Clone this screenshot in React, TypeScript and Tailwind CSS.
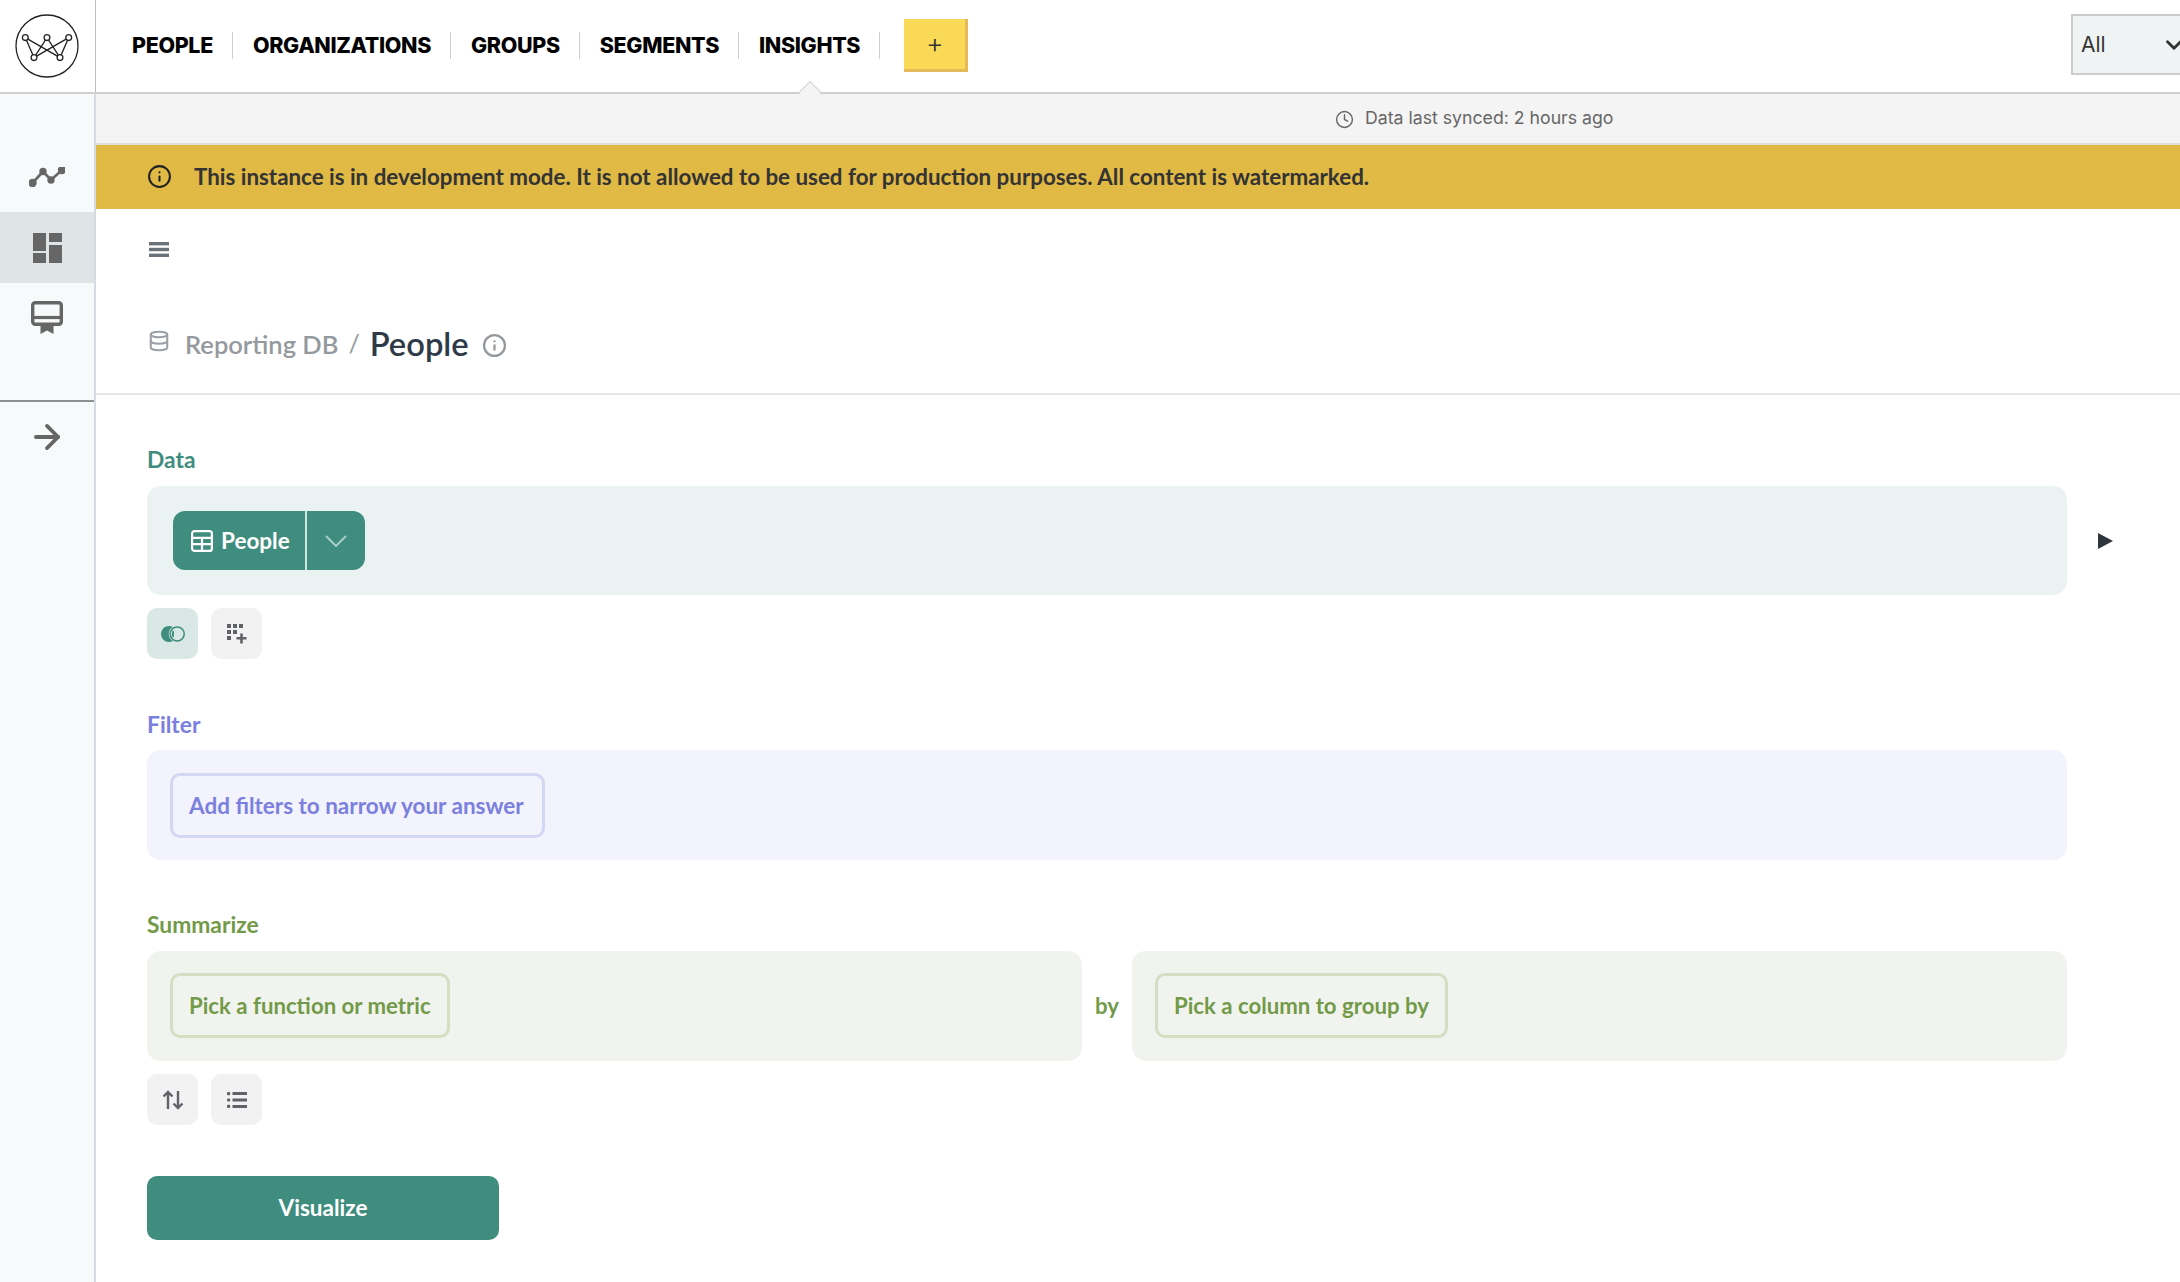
import { ArrowRight, ChevronDown, Clock, Database, Info } from "lucide-react";

const navItems = ["PEOPLE", "ORGANIZATIONS", "GROUPS", "SEGMENTS", "INSIGHTS"];

const Logo = () => (
  <svg viewBox="0 0 64 64" className="w-[64px] h-[64px]" fill="none" stroke="#222" strokeWidth="1.3">
    <circle cx="32" cy="32" r="31" />
    <path d="M10.3 23.6 L19 43.6 L32 23.6 L45 43.6 L53.7 23.6 L19 43.6 M10.3 23.6 L45 43.6" />
    <g fill="#fff">
      <circle cx="10.3" cy="23.6" r="2.9" />
      <circle cx="32" cy="23.6" r="2.9" />
      <circle cx="53.7" cy="23.6" r="2.9" />
      <circle cx="19" cy="43.6" r="2.9" />
      <circle cx="45" cy="43.6" r="2.9" />
    </g>
  </svg>
);

const TrendIcon = () => (
  <svg viewBox="0 0 36 20" className="w-[36px] h-[20px]" fill="none" stroke="#666" strokeWidth="2.6">
    <path d="M3.5 16 L14 4.5 L22 13 L33 3" />
    <circle cx="3.5" cy="16" r="2.9" fill="#666" />
    <circle cx="14" cy="4.5" r="2.4" fill="#666" />
    <circle cx="22" cy="13" r="2.4" fill="#666" />
    <circle cx="33" cy="3" r="2.9" fill="#666" />
  </svg>
);

const DashboardIcon = () => (
  <svg viewBox="0 0 29 30" className="w-[29px] h-[30px]" fill="#666">
    <rect x="0" y="0" width="13" height="18" />
    <rect x="16" y="0" width="13" height="9" />
    <rect x="0" y="20" width="13" height="10" />
    <rect x="16" y="12" width="13" height="18" />
  </svg>
);

const RibbonIcon = () => (
  <svg viewBox="0 0 32 33" className="w-[32px] h-[33px]" fill="none" stroke="#666" strokeWidth="3.4">
    <rect x="1.7" y="1.7" width="28.6" height="21.6" rx="2.5" />
    <path d="M2 16.5 H30" strokeWidth="3.2" />
    <path d="M9.5 23 H22.5 V33 L16 29.5 L9.5 33 Z" fill="#666" stroke="none" />
  </svg>
);

const TableIcon = () => (
  <svg viewBox="0 0 22 22" className="w-[22px] h-[22px]" fill="none" stroke="#fff" strokeWidth="2.2">
    <rect x="1.1" y="1.1" width="19.8" height="19.8" rx="2.5" />
    <path d="M1 7.8 H21 M1 14.2 H21 M11 7.8 V21" />
  </svg>
);

const JoinIcon = () => (
  <svg viewBox="0 0 24 16" className="w-[24px] h-[16px]">
    <path d="M12 1.07 A8 8 0 1 0 12 14.93 A7.8 7.8 0 0 1 12 1.07 Z" fill="#3f8d7e" />
    <circle cx="16.2" cy="8" r="7" fill="none" stroke="#3f8d7e" strokeWidth="1.6" />
    <ellipse cx="12" cy="8" rx="1" ry="3.6" fill="#3f8d7e" />
  </svg>
);

const ExpressionIcon = () => (
  <svg viewBox="0 0 20 20" className="w-[20px] h-[20px]" fill="#5f6368">
    <rect x="0" y="0" width="4" height="4" />
    <rect x="6" y="0" width="4" height="4" />
    <rect x="12" y="0" width="4" height="4" />
    <rect x="0" y="6" width="4" height="4" />
    <rect x="6" y="6" width="4" height="4" />
    <rect x="0" y="12" width="4" height="4" />
    <path d="M13.2 9.5 H15.8 V13 H19.5 V15.6 H15.8 V19.5 H13.2 V15.6 H9.5 V13 H13.2 Z" />
  </svg>
);

const SortIcon = () => (
  <svg viewBox="0 0 22 20" className="w-[22px] h-[20px]" fill="none" stroke="#5f6368" strokeWidth="2.4">
    <path d="M6 19 V2 M1.5 6.5 L6 2 L10.5 6.5" />
    <path d="M16 1 V18 M11.5 13.5 L16 18 L20.5 13.5" />
  </svg>
);

const ListIcon = () => (
  <svg viewBox="0 0 20 16" className="w-[20px] h-[16px]" fill="#5f6368">
    <rect x="0" y="0" width="3.2" height="3.2" rx="1" />
    <rect x="0" y="6.4" width="3.2" height="3.2" rx="1" />
    <rect x="0" y="12.8" width="3.2" height="3.2" rx="1" />
    <rect x="5.5" y="0" width="14.5" height="3" />
    <rect x="5.5" y="6.5" width="14.5" height="3" />
    <rect x="5.5" y="13" width="14.5" height="3" />
  </svg>
);

const MenuBars = () => (
  <svg viewBox="0 0 20 15" className="w-[20px] h-[15px]" fill="#6a7178">
    <rect x="0" y="0" width="20" height="3.4" />
    <rect x="0" y="5.8" width="20" height="3.4" />
    <rect x="0" y="11.6" width="20" height="3.4" />
  </svg>
);

const SmallButton = ({ children, active }: { children: React.ReactNode; active?: boolean }) => (
  <button className={`w-[51px] h-[51px] rounded-[10px] flex items-center justify-center ${active ? "bg-[#d9e8e4]" : "bg-[#f2f2f2]"}`}>
    {children}
  </button>
);

const App = () => {
  return (
    <div className="w-[2180px] h-[1282px] flex flex-col overflow-hidden bg-white font-['Lato','Noto_Sans',sans-serif]">
      {/* top bar */}
      <header className="relative h-[94px] shrink-0 flex items-center border-b-2 border-[#cfcfcf]">
        <div className="w-[96px] h-full shrink-0 flex items-center justify-center border-r border-[#bdbdbd] pr-[2px]">
          <Logo />
        </div>
        <nav className="flex items-center pl-[36px] pb-[2px] font-['Inter',sans-serif] font-extrabold text-[21.5px] text-black tracking-[-0.35px]">
          {navItems.map((item) => (
            <div key={item} className="h-[27px] flex items-center pr-[19px] mr-[20px] border-r border-[#cfcfcf]">
              {item}
            </div>
          ))}
        </nav>
        <button className="w-[64px] h-[53px] mt-[-1px] ml-[4px] bg-[#f9d955] border-r-[3px] border-b-[3px] border-[#e3b95a] flex items-center justify-center text-[27px] font-light text-[#333] font-['Inter',sans-serif]">
          +
        </button>
        <div className="ml-auto w-[109px] h-[61px] mt-[-3px] bg-[#eff3f4] border-2 border-r-0 border-[#cccccc] flex items-center justify-between pl-[8px] text-[21px] text-[#333] font-['Inter',sans-serif] overflow-hidden">
          All
          <ChevronDown className="w-[26px] h-[26px] mr-[-7px] text-[#333]" strokeWidth={2.6} />
        </div>
        {/* caret under the active nav item */}
        <div className="absolute left-[802px] top-[84px] w-[16px] h-[16px] rotate-45 bg-[#f4f4f4] border-l border-t border-[#d4d4d4]" />
      </header>

      <div className="flex flex-1 min-h-0">
        {/* sidebar */}
        <aside className="w-[96px] shrink-0 bg-[#f7fafb] border-r-2 border-[#d5dbe3] flex flex-col">
          <div className="h-[118px] flex items-center justify-center pt-[48px]">
            <TrendIcon />
          </div>
          <div className="h-[71px] bg-[#dfe4e6] flex items-center justify-center">
            <DashboardIcon />
          </div>
          <div className="h-[71px] flex items-center justify-center pb-[2px]">
            <RibbonIcon />
          </div>
          <div className="h-[48px] border-b-2 border-[#8c9195]" />
          <div className="h-[70px] flex items-center justify-center">
            <ArrowRight className="w-[38px] h-[38px] text-[#666]" strokeWidth={2.4} />
          </div>
        </aside>

        {/* main */}
        <main className="flex-1 min-w-0 flex flex-col">
          <div className="h-[51px] shrink-0 bg-[#f4f4f4] border-b-2 border-[#dedede] flex items-center pl-[1239px] text-[17.7px] text-[#666] font-['Inter',sans-serif] font-normal">
            <Clock className="w-[19px] h-[19px] mr-[11px] mt-[2px] text-[#666]" strokeWidth={1.8} />
            <span>Data last synced: 2 hours ago</span>
          </div>
          <div className="h-[64px] shrink-0 bg-[#e1b945] flex items-center pl-[51px] pb-[1px] text-[22.35px] font-bold text-[#333]">
            <Info className="w-[25px] h-[25px] mr-[22px] text-[#222]" strokeWidth={2} />
            <span>This instance is in development mode. It is not allowed to be used for production purposes. All content is watermarked.</span>
          </div>

          <div className="h-[186px] shrink-0 border-b-2 border-[#e4e7ea] pl-[53px] pt-[33px]">
            <MenuBars />
            <div className="flex items-center mt-[67px] h-[40px]">
              <Database className="w-[22px] h-[24px] mt-[-6px] ml-[-1px] text-[#9aa0a6]" strokeWidth={2.2} />
              <span className="ml-[15px] text-[25.5px] font-semibold text-[#94999e]">Reporting DB</span>
              <span className="ml-[10px] text-[25px] text-[#94999e]">/</span>
              <span className="ml-[10px] text-[32.7px] font-semibold text-[#2e3a47]">People</span>
              <Info className="w-[25px] h-[25px] ml-[13px] mt-[3px] text-[#94999e]" strokeWidth={2.2} />
            </div>
          </div>

          <div className="pl-[51px] pt-[51px] flex flex-col">
            {/* data */}
            <div className="h-[28px] leading-[26px] text-[22.8px] font-bold text-[#3f8d7e] mb-[12px]">Data</div>
            <div className="flex items-center">
              <div className="w-[1920px] h-[109px] rounded-[14px] bg-[#ebf3f2] pl-[26px] flex items-center">
                <div className="h-[59px] w-[192px] rounded-[12px] bg-[#3f8d7e] flex items-center text-white">
                  <div className="h-full w-[134px] flex items-center pl-[18px] border-r-2 border-[#cfe3df]">
                    <TableIcon />
                    <span className="ml-[8px] text-[22.5px] font-bold">People</span>
                  </div>
                  <div className="flex-1 flex items-center justify-center">
                    <svg viewBox="0 0 22 12" className="w-[22px] h-[12px]" fill="none" stroke="#a9cdc6" strokeWidth="2">
                      <path d="M1 1 L11 11 L21 1" />
                    </svg>
                  </div>
                </div>
              </div>
              <svg viewBox="0 0 15 16" className="w-[15px] h-[16px] ml-[31px]" fill="#2e353b">
                <path d="M0 0 L15 8 L0 16 Z" />
              </svg>
            </div>
            <div className="flex gap-[13px] mt-[13px]">
              <SmallButton active>
                <JoinIcon />
              </SmallButton>
              <SmallButton>
                <ExpressionIcon />
              </SmallButton>
            </div>

            {/* filter */}
            <div className="h-[28px] leading-[26px] mt-[52px] text-[22.8px] font-bold text-[#7b80de] mb-[11px]">Filter</div>
            <div className="w-[1920px] h-[110px] rounded-[14px] bg-[#f2f3fc] pl-[23px] pt-[1px] flex items-center">
              <div className="h-[65px] pl-[16px] pr-[18px] rounded-[10px] border-[3px] border-[#d4d7f4] flex items-center text-[22.5px] font-bold text-[#7b80de]">
                Add filters to narrow your answer
              </div>
            </div>

            {/* summarize */}
            <div className="h-[28px] leading-[26px] mt-[51px] text-[22.8px] font-bold text-[#729a48] mb-[12px]">Summarize</div>
            <div className="w-[1920px] flex items-center">
              <div className="w-[935px] h-[110px] rounded-[14px] bg-[#f1f4ee] pl-[23px] pb-[2px] flex items-center">
                <div className="h-[65px] px-[16px] pt-[1px] rounded-[10px] border-[3px] border-[#d3dec3] flex items-center text-[22.2px] font-bold text-[#729a48]">
                  Pick a function or metric
                </div>
              </div>
              <div className="w-[50px] pb-[1px] text-center text-[22.2px] font-bold text-[#729a48]">by</div>
              <div className="flex-1 h-[110px] rounded-[14px] bg-[#f1f4ee] pl-[23px] pb-[2px] flex items-center">
                <div className="h-[65px] px-[16px] pt-[1px] rounded-[10px] border-[3px] border-[#d3dec3] flex items-center text-[22.2px] font-bold text-[#729a48]">
                  Pick a column to group by
                </div>
              </div>
            </div>
            <div className="flex gap-[13px] mt-[13px]">
              <SmallButton>
                <SortIcon />
              </SmallButton>
              <SmallButton>
                <ListIcon />
              </SmallButton>
            </div>

            <button className="w-[352px] h-[64px] mt-[51px] rounded-[10px] bg-[#3f8d7e] text-white text-[22.5px] font-bold">
              Visualize
            </button>
          </div>
        </main>
      </div>
    </div>
  );
};

export default App;
